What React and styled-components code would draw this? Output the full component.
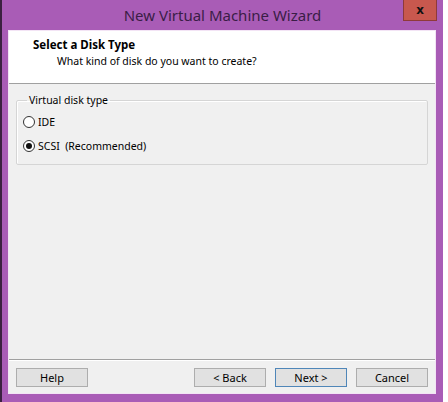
import React from "react";
import styled, { createGlobalStyle } from "styled-components";

const Global = createGlobalStyle`
  html, body { margin: 0; padding: 0; background: #ffffff; }
  body { width: 448px; height: 402px; overflow: hidden; font-family: "Noto Sans", "Open Sans", sans-serif; }
`;

const Frame = styled.div`
  width: 443px;
  height: 402px;
  box-sizing: border-box;
  border-left: 2px solid #3b2140;
  background: #a95cb6;
  display: flex;
  flex-direction: column;
`;

const TitleBar = styled.div`
  height: 31px;
  display: grid;
  grid-template-columns: 1fr auto 1fr;
  align-items: start;
`;

const Title = styled.div`
  grid-column: 2;
  font-family: "Noto Sans", sans-serif;
  font-size: 15px;
  line-height: 31px;
  color: #3a1d46;
`;

const Close = styled.div`
  grid-column: 3;
  justify-self: end;
  margin-right: 6px;
  width: 34px;
  height: 21px;
  box-sizing: border-box;
  background: #c8584e;
  border: 1px solid #8e3a3a;
  border-top: none;
  display: flex;
  align-items: center;
  justify-content: center;
  font-family: "DejaVu Sans", sans-serif;
  font-weight: bold;
  font-size: 12px;
  color: #111;
`;

const Client = styled.div`
  margin: 0 8px 9px 7px;
  flex: 1;
  background: #f0f0f0;
  display: flex;
  flex-direction: column;
  box-shadow: 0 0 0 1px #f3e4f5;
`;

const Header = styled.div`
  height: 53px;
  box-sizing: border-box;
  background: #ffffff;
  border-bottom: 1px solid #a0a0a0;
  padding: 6px 0 0 24px;
  display: flex;
  flex-direction: column;
`;

const HeadTitle = styled.div`
  font-size: 11.5px;
  font-weight: bold;
  color: #000;
  line-height: 16px;
`;

const HeadSub = styled.div`
  font-size: 10.5px;
  color: #000;
  line-height: 16px;
  padding-left: 24px;
`;

const Body = styled.div`
  flex: 1;
  padding: 9px 7px 0 7px;
  display: flex;
  flex-direction: column;
`;

const Group = styled.fieldset`
  margin: 0;
  padding: 7px 0 10px 6px;
  border: 1px solid #d5d5d5;
  border-radius: 2px;
  box-shadow: inset 1px 1px 0 #ffffff;
  display: flex;
  flex-direction: column;
  gap: 8px;
`;

const Legend = styled.legend`
  font-size: 10.5px;
  color: #000;
  padding: 0 2px;
  margin-left: 4px;
  line-height: 14px;
`;

const Option = styled.label`
  display: flex;
  align-items: center;
  gap: 3px;
  font-size: 10.5px;
  color: #000;
  height: 16px;
`;

const Radio = styled.span`
  width: 12px;
  height: 12px;
  box-sizing: border-box;
  border: 1px solid #333;
  border-radius: 50%;
  background: #fff;
  display: flex;
  align-items: center;
  justify-content: center;
  &::after {
    content: "";
    width: 6px;
    height: 6px;
    border-radius: 50%;
    background: ${(p) => (p.$checked ? "#111" : "transparent")};
  }
`;

const Footer = styled.div`
  border-top: 1px solid #a0a0a0;
  box-shadow: inset 0 1px 0 #ffffff;
  height: 34px;
  box-sizing: border-box;
  padding: 8px 7px 0 7px;
  display: flex;
  gap: 9px;
`;

const Button = styled.div`
  width: 72px;
  height: 19px;
  box-sizing: border-box;
  background: #e1e1e1;
  border: 1px solid ${(p) => (p.$default ? "#4f86b8" : "#adadad")};
  font-size: 11px;
  color: #000;
  display: flex;
  align-items: center;
  justify-content: center;
  margin-left: ${(p) => (p.$push ? "auto" : "0")};
`;

export default function App() {
  return (
    <>
      <Global />
      <Frame>
        <TitleBar>
          <Title>New Virtual Machine Wizard</Title>
          <Close>x</Close>
        </TitleBar>
        <Client>
          <Header>
            <HeadTitle>Select a Disk Type</HeadTitle>
            <HeadSub>What kind of disk do you want to create?</HeadSub>
          </Header>
          <Body>
            <Group>
              <Legend>Virtual disk type</Legend>
              <Option>
                <Radio />
                IDE
              </Option>
              <Option>
                <Radio $checked />
                SCSI&nbsp;&nbsp;(Recommended)
              </Option>
            </Group>
          </Body>
          <Footer>
            <Button>Help</Button>
            <Button $push>&lt; Back</Button>
            <Button $default>Next &gt;</Button>
            <Button>Cancel</Button>
          </Footer>
        </Client>
      </Frame>
    </>
  );
}
